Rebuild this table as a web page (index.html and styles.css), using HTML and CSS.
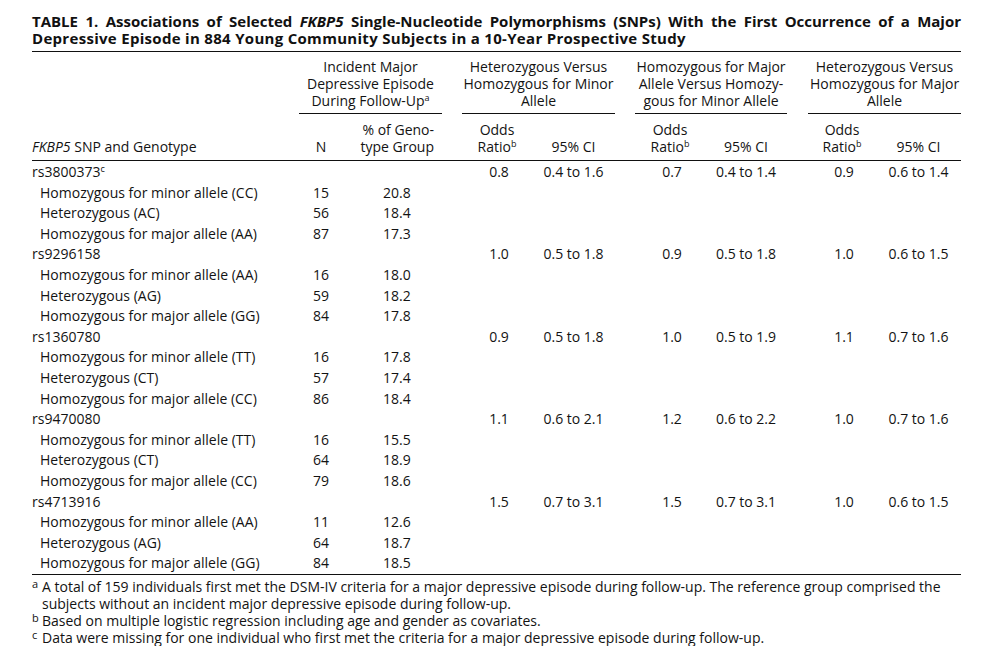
FILE: index.html
```html
<!DOCTYPE html>
<html lang="en">
<head>
<meta charset="utf-8">
<title>Table 1</title>
<link rel="stylesheet" href="styles.css">
</head>
<body>
<div class="page">
  <div class="title">
    <span class="tl tl-1">TABLE 1. Associations of Selected <i>FKBP5</i> Single-Nucleotide Polymorphisms (SNPs) With the First Occurrence of a Major</span>
    <span class="tl">Depressive Episode in 884 Young Community Subjects in a 10-Year Prospective Study</span>
  </div>
  <table class="data">
    <colgroup>
      <col class="c-lbl"><col class="c-n"><col class="c-pct"><col class="c-gap">
      <col class="c-or1"><col class="c-ci1"><col class="c-gap">
      <col class="c-or2"><col class="c-ci2"><col class="c-gap3">
      <col class="c-or3"><col class="c-ci3">
    </colgroup>
    <thead>
      <tr class="spans">
        <th></th>
        <th colspan="2" class="spanner">Incident Major<br>Depressive Episode<br>During Follow-Up<sup>a</sup></th>
        <th></th>
        <th colspan="2" class="spanner">Heterozygous Versus<br>Homozygous for Minor<br>Allele</th>
        <th></th>
        <th colspan="2" class="spanner">Homozygous for Major<br>Allele Versus Homozy-<br>gous for Minor Allele</th>
        <th></th>
        <th colspan="2" class="spanner">Heterozygous Versus<br>Homozygous for Major<br>Allele</th>
      </tr>
      <tr class="subs">
        <th class="lbl"><i>FKBP5</i> SNP and Genotype</th>
        <th class="num">N</th>
        <th class="pct">% of Geno-<br>type Group</th>
        <th></th>
        <th class="num">Odds<br>Ratio<sup>b</sup></th>
        <th class="num">95% CI</th>
        <th></th>
        <th class="num">Odds<br>Ratio<sup>b</sup></th>
        <th class="num">95% CI</th>
        <th></th>
        <th class="num">Odds<br>Ratio<sup>b</sup></th>
        <th class="num">95% CI</th>
      </tr>
    </thead>
    <tbody>
      <tr class="snp"><td class="lbl">rs3800373<sup class="c">c</sup></td><td></td><td></td><td></td><td class="num or">0.8</td><td class="num">0.4 to 1.6</td><td></td><td class="num or">0.7</td><td class="num">0.4 to 1.4</td><td></td><td class="num or">0.9</td><td class="num">0.6 to 1.4</td></tr>
      <tr><td class="sub">Homozygous for minor allele (CC)</td><td class="num">15</td><td class="pctv">20.8</td><td colspan="9"></td></tr>
      <tr><td class="sub">Heterozygous (AC)</td><td class="num">56</td><td class="pctv">18.4</td><td colspan="9"></td></tr>
      <tr><td class="sub">Homozygous for major allele (AA)</td><td class="num">87</td><td class="pctv">17.3</td><td colspan="9"></td></tr>
      <tr class="snp"><td class="lbl">rs9296158</td><td></td><td></td><td></td><td class="num or">1.0</td><td class="num">0.5 to 1.8</td><td></td><td class="num or">0.9</td><td class="num">0.5 to 1.8</td><td></td><td class="num or">1.0</td><td class="num">0.6 to 1.5</td></tr>
      <tr><td class="sub">Homozygous for minor allele (AA)</td><td class="num">16</td><td class="pctv">18.0</td><td colspan="9"></td></tr>
      <tr><td class="sub">Heterozygous (AG)</td><td class="num">59</td><td class="pctv">18.2</td><td colspan="9"></td></tr>
      <tr><td class="sub">Homozygous for major allele (GG)</td><td class="num">84</td><td class="pctv">17.8</td><td colspan="9"></td></tr>
      <tr class="snp"><td class="lbl">rs1360780</td><td></td><td></td><td></td><td class="num or">0.9</td><td class="num">0.5 to 1.8</td><td></td><td class="num or">1.0</td><td class="num">0.5 to 1.9</td><td></td><td class="num or">1.1</td><td class="num">0.7 to 1.6</td></tr>
      <tr><td class="sub">Homozygous for minor allele (TT)</td><td class="num">16</td><td class="pctv">17.8</td><td colspan="9"></td></tr>
      <tr><td class="sub">Heterozygous (CT)</td><td class="num">57</td><td class="pctv">17.4</td><td colspan="9"></td></tr>
      <tr><td class="sub">Homozygous for major allele (CC)</td><td class="num">86</td><td class="pctv">18.4</td><td colspan="9"></td></tr>
      <tr class="snp"><td class="lbl">rs9470080</td><td></td><td></td><td></td><td class="num or">1.1</td><td class="num">0.6 to 2.1</td><td></td><td class="num or">1.2</td><td class="num">0.6 to 2.2</td><td></td><td class="num or">1.0</td><td class="num">0.7 to 1.6</td></tr>
      <tr><td class="sub">Homozygous for minor allele (TT)</td><td class="num">16</td><td class="pctv">15.5</td><td colspan="9"></td></tr>
      <tr><td class="sub">Heterozygous (CT)</td><td class="num">64</td><td class="pctv">18.9</td><td colspan="9"></td></tr>
      <tr><td class="sub">Homozygous for major allele (CC)</td><td class="num">79</td><td class="pctv">18.6</td><td colspan="9"></td></tr>
      <tr class="snp"><td class="lbl">rs4713916</td><td></td><td></td><td></td><td class="num or">1.5</td><td class="num">0.7 to 3.1</td><td></td><td class="num or">1.5</td><td class="num">0.7 to 3.1</td><td></td><td class="num or">1.0</td><td class="num">0.6 to 1.5</td></tr>
      <tr><td class="sub">Homozygous for minor allele (AA)</td><td class="num">11</td><td class="pctv">12.6</td><td colspan="9"></td></tr>
      <tr><td class="sub">Heterozygous (AG)</td><td class="num">64</td><td class="pctv">18.7</td><td colspan="9"></td></tr>
      <tr><td class="sub">Homozygous for major allele (GG)</td><td class="num">84</td><td class="pctv">18.5</td><td colspan="9"></td></tr>
    </tbody>
  </table>
  <div class="notes">
    <p class="note"><span class="mark">a</span><span class="ntext">A total of 159 individuals first met the DSM-IV criteria for a major depressive episode during follow-up. The reference group comprised the subjects without an incident major depressive episode during follow-up.</span></p>
    <p class="note"><span class="mark">b</span><span class="ntext">Based on multiple logistic regression including age and gender as covariates.</span></p>
    <p class="note"><span class="mark">c</span><span class="ntext">Data were missing for one individual who first met the criteria for a major depressive episode during follow-up.</span></p>
  </div>
</div>
</body>
</html>
```

FILE: styles.css
```css
html, body {
  margin: 0;
  padding: 0;
  background: #ffffff;
}

body {
  font-family: "Open Sans", "Noto Sans", "DejaVu Sans", sans-serif;
  font-size: 14px;
  color: #131313;
}

.page {
  width: 929px;
  margin-left: 32px;
  padding-top: 13px;
}

.title {
  font-weight: 700;
  font-size: 15px;
  line-height: 17px;
  letter-spacing: 0.3px;
  color: #111;
  padding-bottom: 4px;
  border-bottom: 1px solid #111;
}

.tl {
  display: block;
  white-space: nowrap;
}

.tl-1 {
  letter-spacing: 0;
  text-align: justify;
  text-align-last: justify;
}

.data {
  width: 929px;
  border-collapse: collapse;
  table-layout: fixed;
  border-bottom: 1px solid #111;
}

.c-lbl { width: 267px; }
.c-n { width: 44px; }
.c-pct { width: 99px; }
.c-gap { width: 20px; }
.c-gap3 { width: 21px; }
.c-or1 { width: 70px; }
.c-ci1 { width: 83px; }
.c-or2 { width: 70px; }
.c-ci2 { width: 82px; }
.c-or3 { width: 68px; }
.c-ci3 { width: 85px; }

th {
  font-weight: 400;
  padding: 0;
  line-height: 17px;
}

.spans th {
  padding-top: 6px;
  vertical-align: bottom;
}

.spans .spanner {
  text-align: center;
  padding-bottom: 4px;
  border-bottom: 1px solid #111;
}

.subs th {
  padding-top: 7px;
  padding-bottom: 5px;
  vertical-align: bottom;
  border-bottom: 1px solid #111;
}

.subs .lbl {
  text-align: left;
}

.subs .pct {
  text-align: right;
  padding-right: 8px;
}

sup {
  font-size: 9px;
  line-height: 0;
  vertical-align: 5px;
}

td {
  padding: 0;
  line-height: 20.6px;
  white-space: nowrap;
}

.data tbody tr:first-child td {
  padding-top: 1px;
}

.num {
  text-align: center;
}

td.or {
  padding-left: 4px;
}

td.lbl {
  text-align: left;
}

td.sub {
  padding-left: 8px;
}

td.pctv {
  padding-left: 40px;
}

.notes {
  padding-top: 3px;
  line-height: 17px;
}

.note {
  margin: 0;
  display: flex;
}

.mark {
  flex: none;
  width: 10px;
  font-size: 11px;
  line-height: 12px;
}

.ntext {
  flex: 1;
}
```
